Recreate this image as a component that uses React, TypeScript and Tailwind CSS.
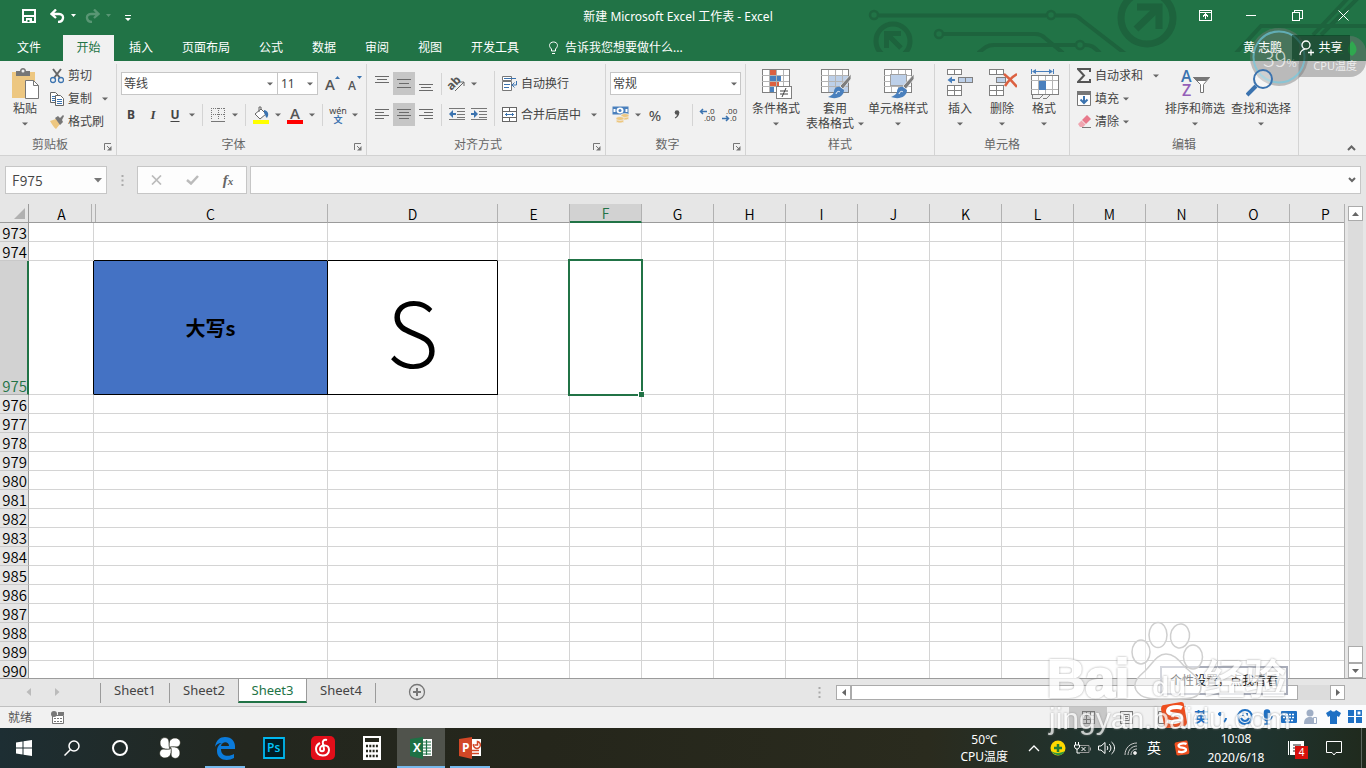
import React from 'react';
import type { ReactNode } from 'react';

const Caret = ({ className = '' }: { className?: string }) => (
  <svg className={`shrink-0 ${className}`} width="6" height="4" viewBox="0 0 6 4">
    <path d="M0 0.5h6L3 3.5z" fill="#666" />
  </svg>
);

const Launcher = () => (
  <svg width="8" height="8" viewBox="0 0 8 8">
    <path d="M0.5 7V0.5H7M3 3l3 3" stroke="#777" fill="none" />
    <path d="M7.5 3v4.5H3z" fill="#777" />
  </svg>
);

function Group({ label, width, launcher, children }: { label: string; width: string; launcher?: boolean; children: ReactNode }) {
  return (
    <section aria-label={label} className={`flex shrink-0 flex-col border-r border-[#d4d4d4] ${width}`}>
      <div className="flex h-[71px]">{children}</div>
      <div className={`relative h-[18px] text-center leading-5 text-[#666] ${launcher ? 'pr-4' : ''}`}>
        {label}
        {launcher && (
          <button aria-label={`${label}设置`} className="absolute right-1 bottom-0.5">
            <Launcher />
          </button>
        )}
      </div>
    </section>
  );
}

const Btn = ({ label, w = 'w-[22px]', active, children }: { label: string; w?: string; active?: boolean; children: ReactNode }) => (
  <button aria-label={label} className={`flex h-[23px] shrink-0 items-center justify-center ${w} ${active ? 'bg-[#c6c6c6]' : ''}`}>
    {children}
  </button>
);
const Drop = ({ label }: { label: string }) => (
  <Btn label={label} w="w-3">
    <Caret />
  </Btn>
);
const Sep = ({ h = 'h-[22px]' }: { h?: string }) => <div className={`mx-1 w-px shrink-0 bg-[#d4d4d4] ${h}`} />;

function Big({ label, second, w, children }: { label: string; second?: string; w: string; children: ReactNode }) {
  return (
    <button className={`flex shrink-0 flex-col items-center pt-1 whitespace-nowrap ${w}`}>
      {children}
      <span className="mt-0.5 leading-[15px]">{label}</span>
      <span className="flex h-[15px] items-center gap-1 leading-[15px]">
        {second}
        <Caret />
      </span>
    </button>
  );
}

function Row({ label, drop, children }: { label: string; drop?: string; children: ReactNode }) {
  return (
    <button className="flex h-[23px] items-center gap-1 whitespace-nowrap">
      {children}
      <span>{label}</span>
      {drop && <Caret className={drop} />}
    </button>
  );
}

const Lines = ({ rows }: { rows: number[][] }) => (
  <svg width="16" height="18" viewBox="0 0 16 18" shapeRendering="crispEdges">
    {rows.map(([x, y, w]) => (
      <rect key={y} x={x} y={y} width={w} height="1" fill="#6a6a6a" />
    ))}
  </svg>
);

const GridIcon = ({ kind }: { kind: 'cond' | 'table' | 'cell' }) => (
  <svg width="32" height="31" viewBox="0 0 32 31">
    <g shapeRendering="crispEdges">
      <path d="M2.5 1.5h27v23h-27z" fill="#fff" stroke="#808080" />
      {kind === 'cond' && (
        <>
          <path d="M10 2h6v5h-6zM10 13h9v5h-9z" fill="#dc6141" />
          <path d="M10 7h11v6H10zM10 18h4v6h-4z" fill="#4a80bd" />
        </>
      )}
      {kind === 'table' && <path d="M9 8h20v16H9z" fill="#bdd0e9" />}
      <path d="M2 7.5h27M2 13.5h27M2 18.5h27M9.5 2v22M16.5 2v22M23.5 2v22" stroke="#b4b4b4" fill="none" />
      {kind === 'cell' && <path d="M8.5 6.5h16v11h-16z" fill="#bdd0e9" stroke="#a0a0a0" />}
      {kind === 'cond' && <path d="M16.5 18.5h15v12h-15z" fill="#fff" stroke="#808080" />}
    </g>
    {kind === 'cond' ? (
      <path d="M20 23h8M20 26h8M26 20l-4 9" stroke="#444" fill="none" />
    ) : (
      <>
        <path d="M32 6L21 18l3 3 8-10z" fill="#7e7e7e" stroke="#f1f1f1" strokeWidth=".8" />
        <path d="M21 19c-5-1-6 3-6 5-1 3-4 4-6 5 8 3 16 0 16-7z" fill="#4a80bd" />
        <path d="M17 26c1-3 3-3 4-2" stroke="#fff" fill="none" />
      </>
    )}
  </svg>
);

const CellsIcon = ({ kind }: { kind: 'ins' | 'del' | 'fmt' }) => (
  <svg width="30" height="31" viewBox="0 0 30 31">
    <g shapeRendering="crispEdges" fill="#fff" stroke="#808080">
      {kind === 'fmt' ? (
        <>
          <path d="M2.5 7.5h27v19h-27z" />
          <path d="M2 12.500h27M2 21.500h27M9.500 8v18M16.500 8v18M23.500 8v18" stroke="#b4b4b4" />
          <path d="M10 13h7v9h-7z" fill="#4a80bd" stroke="none" />
          <path d="M3 27v3h8l3-3M14 30h4l3-3" fill="none" />
          <path d="M2.500 1v5M24.500 1v5M4 3.500h19" stroke="#4a80bd" />
        </>
      ) : (
        <>
          <path d="M2.500 1.500h14v5h-14zM9.500 1v5M2.500 17.500h14v10h-14zM2.500 22.500h14M9.500 17v10" />
          <path d={kind === 'ins' ? 'M13.500 9.500h14v5h-14zM20.500 9v5' : 'M9.500 9.500h9v5h-9z'} fill="#bdd0e9" />
        </>
      )}
    </g>
    {kind === 'ins' && <path d="M10 11v2H7v2.500L2.500 12 7 8.500V11z" fill="#4a80bd" />}
    {kind === 'del' && <path d="M17 6c5 4 9 8 13 13M30 6c-5 3-9 7-12 12" stroke="#dc6141" strokeWidth="2.500" fill="none" />}
    {kind === 'fmt' && <path d="M7 1L3 3.500 7 6zM20 1l4 2.500L20 6z" fill="#4a80bd" />}
  </svg>
);

const FontA = ({ up }: { up?: boolean }) => (
  <svg className="overflow-visible" width="16" height="20" viewBox="0 0 16 20">
    <text x={up ? 0 : 1} y="16" fontSize={up ? 15 : 12} fontWeight="600" fill="#555" fontFamily="Open Sans">A</text>
    <path d={up ? 'M10 5l2.500-3L15 5z' : 'M10 2h5l-2.500 3z'} fill="#3b73af" />
  </svg>
);

function Header() {
  const tabs = ['插入', '页面布局', '公式', '数据', '审阅', '视图', '开发工具'];
  return (
    <header className="relative h-[61px] shrink-0 overflow-hidden bg-[#217346] text-white">
      <svg className="absolute top-0 right-0" width="506" height="52" viewBox="0 0 506 52" fill="none" stroke="#1d633d" strokeWidth="4">
        <circle cx="14" cy="15" r="4" strokeWidth="2.500" />
        <path d="M19 15.500h167" />
        <circle cx="191" cy="15" r="4" strokeWidth="2.500" />
        <path d="M196 15.500h17c3 0 5 1 8 4l44 34" />
        <circle cx="79" cy="34" r="4" strokeWidth="2.500" />
        <path d="M84 34h91c4 0 7 1 10 4l18 15M118 53l8-6c3-2 5-2 8-2h81" />
        <circle cx="220" cy="45" r="4" strokeWidth="2.500" />
        <path d="M225 45c6 0 8 1 15 8" />
        <circle cx="33" cy="41" r="17" strokeWidth="5" />
        <path d="M41 33.500H26.500V48M27 34l14 14" strokeWidth="5" />
        <circle cx="287" cy="18" r="26" strokeWidth="7" />
        <path d="M277 7h22v22M299 7l-23 22" strokeWidth="7" />
        <path d="M376 53l25-27h105M461 35l40-40M453 35l35-37" />
      </svg>
      <div className="relative flex h-[35px] items-center">
        <div className="flex flex-1 items-center pb-1 pl-[22px]">
          <button aria-label="保存">
            <svg width="14" height="14" viewBox="0 0 14 14" fill="none" stroke="#fff" strokeWidth="2">
              <path d="M1 1h12v12H1zM2 7h10" /><path d="M4 9h6v5H4z" fill="#fff" stroke="none" /><path d="M5.500 11h2v2h-2z" fill="#217346" stroke="none" />
            </svg>
          </button>
          <button aria-label="撤消" className="ml-[14px] flex items-center gap-1.5">
            <svg width="15" height="14" viewBox="0 0 15 14" fill="none" stroke="#fff" strokeWidth="2.300"><path d="M6 0.500L1.500 5 6 9M2 5h7c6 0 5 8-1 8" /></svg>
            <svg width="5" height="3" viewBox="0 0 5 3"><path d="M0 0h5L2.500 3z" fill="#fff" /></svg>
          </button>
          <button aria-label="恢复" className="ml-[9px] flex items-center gap-1.5 opacity-25">
            <svg width="15" height="14" viewBox="0 0 15 14" fill="none" stroke="#fff" strokeWidth="2.300"><path d="M9 0.500L13.500 5 9 9M13 5H6c-6 0-5 8 1 8" /></svg>
            <svg width="5" height="3" viewBox="0 0 5 3"><path d="M0 0h5L2.500 3z" fill="#fff" /></svg>
          </button>
          <button aria-label="自定义快速访问工具栏" className="ml-[14px] pt-1">
            <svg width="6" height="6" viewBox="0 0 6 6"><path d="M0 0h6v1H0zM0 3h6L3 6z" fill="#fff" /></svg>
          </button>
        </div>
        <h1 className="pr-8 pb-0.5 text-[12px] whitespace-nowrap">新建 Microsoft Excel 工作表 - Excel</h1>
        <div className="flex flex-1 justify-end pb-1">
          <button aria-label="功能区显示选项" className="flex w-[46px] justify-center">
            <svg width="13" height="11" viewBox="0 0 13 11" fill="none" stroke="#fff" shapeRendering="crispEdges"><path d="M0.500 0.500h12v10H0.500zM0 2.500h13M6.500 9V4M4 6.500L6.500 4 9 6.500" /></svg>
          </button>
          <button aria-label="最小化" className="flex w-[46px] items-center justify-center"><span className="h-px w-[10px] bg-white" /></button>
          <button aria-label="还原" className="flex w-[46px] justify-center">
            <svg width="11" height="11" viewBox="0 0 11 11" fill="none" stroke="#fff" shapeRendering="crispEdges"><path d="M0.500 2.500h7v8h-7zM2.500 2V0.500h8v8H8" /></svg>
          </button>
          <button aria-label="关闭" className="flex w-[46px] justify-center">
            <svg width="11" height="11" viewBox="0 0 11 11" stroke="#fff"><path d="M0.500 0.500l10 10M10.500 0.500l-10 10" /></svg>
          </button>
        </div>
      </div>
      <nav className="relative flex h-[26px] items-center gap-px leading-[22px]">
        <button className="h-full w-[62px] pr-1">文件</button>
        <button className="h-full w-[51px] bg-[#f1f1f1] text-[#217346]">开始</button>
        {tabs.map((t) => (
          <button key={t} className="h-full px-[14px] whitespace-nowrap">{t}</button>
        ))}
        <button className="ml-[14px] flex items-center gap-1.5 whitespace-nowrap">
          <svg width="11" height="14" viewBox="0 0 11 14" fill="none" stroke="#fff"><path d="M3.500 10V8C0 5 1.500 1 5.500 1s5.500 4 2 7v2zM4 12.500h3" /></svg>
          告诉我您想要做什么...
        </button>
        <button className="relative z-10 mr-[9px] ml-auto">黄 志鹏</button>
        <button className="relative z-10 mr-4 flex h-full w-[58px] items-center justify-center gap-1 bg-[#06381e]/60">
          <svg width="15" height="16" viewBox="0 0 15 16" fill="none" stroke="#fff" strokeWidth="1.300"><circle cx="7" cy="5" r="4" /><path d="M1 15c0-3 2-5 5-6M9 12.500h6M12 9.500v6" /></svg>
          共享
        </button>
      </nav>
    </header>
  );
}

function Ribbon() {
  return (
    <div className="relative flex h-[95px] shrink-0 overflow-hidden border-b border-[#d2d2d2] bg-[#f1f1f1] pt-[3px] text-[#444]">
      <Group label="剪贴板" width="w-[117px]" launcher>
        <Big label="粘贴" w="w-[50px]">
          <svg width="28" height="31" viewBox="0 0 28 31">
            <path d="M1 4h23v26H1z" fill="#edc781" />
            <path d="M5 3h4c0-4 6-4 6 0h4v5H5z" fill="#777" /><circle cx="12" cy="3" r="1.500" fill="#f1f1f1" />
            <path d="M14.500 12.500h8l5 5v13h-13z" fill="#fff" stroke="#777" /><path d="M22.500 12.500v5h5" fill="none" stroke="#777" />
          </svg>
        </Big>
        <div className="flex flex-col items-start">
          <Row label="剪切">
            <svg width="14" height="16" viewBox="0 0 14 16" fill="none"><path d="M3 1l7 9M11 1L4 10" stroke="#666" strokeWidth="2" /><circle cx="3" cy="12" r="2.500" stroke="#3b73af" strokeWidth="1.300" /><circle cx="11" cy="12" r="2.500" stroke="#3b73af" strokeWidth="1.300" /></svg>
          </Row>
          <Row label="复制" drop="ml-[6px]">
            <svg width="14" height="14" viewBox="0 0 14 14" fill="#fff" stroke="#666"><path d="M0.500 0.500h5l3 3v7h-8z" /><path d="M2 4.500h3M2 6.500h3M2 8.500h3" stroke="#3b73af" /><path d="M5.500 3.500h5l3 3v7h-8z" /><path d="M7 7.500h5M7 9.500h5M7 11.500h5" stroke="#3b73af" /></svg>
          </Row>
          <Row label="格式刷">
            <svg width="14" height="14" viewBox="0 0 14 14"><path d="M0 6l6-2 4 5-4 5c-2-1-4-5-6-8z" fill="#edc781" /><path d="M5 3l3-2 2 2 3-3 1 1-2 4 1 2-3 3z" fill="#777" /></svg>
          </Row>
        </div>
      </Group>

      <Group label="字体" width="w-[250px]" launcher>
        <div className="flex flex-col gap-2 pt-2 pl-[3px]">
          <div className="flex items-center pl-px">
            <div className="flex h-[23px] w-[157px] items-center justify-between border border-[#c6c6c6] bg-white pr-1 pl-0.5">
              <input aria-label="字体" defaultValue="等线" className="w-24 outline-none" /><Caret />
            </div>
            <div className="-ml-px flex h-[23px] w-[41px] items-center justify-between border border-[#c6c6c6] bg-white pr-1 pl-[3px]">
              <input aria-label="字号" defaultValue="11" className="w-5 outline-none" /><Caret />
            </div>
            <div className="flex pl-1"><Btn label="增大字号"><FontA up /></Btn><Btn label="减小字号"><FontA /></Btn></div>
          </div>
          <div className="flex items-center">
            <Btn label="加粗"><b>B</b></Btn>
            <Btn label="倾斜"><b className="font-['Liberation_Serif'] text-[13px] italic">I</b></Btn>
            <Btn label="下划线"><b className="underline underline-offset-2">U</b></Btn>
            <Drop label="下划线选项" /><Sep />
            <Btn label="边框">
              <svg width="14" height="14" viewBox="0 0 14 14" fill="none" stroke="#777" shapeRendering="crispEdges"><path d="M0.500 0v12M13.500 0v12M7.500 0v12M0 0.500h14M0 6.500h14" strokeDasharray="1 1" /><path d="M0 13.500h14" /></svg>
            </Btn>
            <Drop label="边框选项" /><Sep />
            <Btn label="填充颜色">
              <svg width="18" height="18" viewBox="0 0 18 18"><path d="M3 8l6-5 5 5-6 5z" fill="#fff" stroke="#666" /><path d="M7 6V1h2v3" fill="none" stroke="#666" /><path d="M12 4c5 1 5 5 3 8-2-1-1-3-3-5z" fill="#3b73af" /><path d="M1 14h16v4H1z" fill="#ff0" /></svg>
            </Btn>
            <Drop label="填充颜色选项" />
            <Btn label="字体颜色">
              <svg className="overflow-visible" width="16" height="18" viewBox="0 0 16 18"><text x="3" y="13" fontSize="15" fontWeight="600" fill="#555" fontFamily="Open Sans">A</text><path d="M0 14h16v4H0z" fill="red" /></svg>
            </Btn>
            <Drop label="字体颜色选项" /><Sep />
            <Btn label="拼音"><span className="flex flex-col items-center"><span className="text-[9px] leading-[9px]">wén</span><span className="text-[9px] leading-[9px] font-bold text-[#3b73af]">文</span></span></Btn>
            <Drop label="拼音选项" />
          </div>
        </div>
      </Group>

      <Group label="对齐方式" width="w-[239px]" launcher>
        <div className="flex flex-col gap-2 pt-2 pl-1">
          <div className="flex items-center">
            <Btn label="顶端对齐"><Lines rows={[[1, 1, 14], [3, 4, 10], [1, 7, 14]]} /></Btn>
            <Btn label="垂直居中" active><Lines rows={[[1, 4, 14], [3, 8, 10], [1, 12, 14]]} /></Btn>
            <Btn label="底端对齐"><Lines rows={[[1, 9, 14], [3, 12, 10], [1, 15, 14]]} /></Btn>
            <Sep />
            <Btn label="方向">
              <svg className="overflow-visible" width="18" height="18" viewBox="0 0 18 18"><text x="-1" y="12" transform="rotate(-45 6 9)" fontSize="12" fontWeight="700" fill="#555" fontFamily="Open Sans">ab</text><path d="M7 16l9-9M16 11V7h-4" stroke="#666" fill="none" /></svg>
            </Btn>
            <Drop label="方向选项" />
          </div>
          <div className="flex items-center">
            <Btn label="左对齐"><Lines rows={[[1, 3, 14], [1, 6, 9], [1, 9, 14], [1, 12, 9]]} /></Btn>
            <Btn label="居中" active><Lines rows={[[1, 3, 14], [3, 6, 10], [1, 9, 14], [3, 12, 10]]} /></Btn>
            <Btn label="右对齐"><Lines rows={[[1, 3, 14], [6, 6, 9], [1, 9, 14], [6, 12, 9]]} /></Btn>
            <Sep />
            {['减少缩进量', '增加缩进量'].map((t, i) => (
              <Btn key={t} label={t}>
                <svg width="16" height="16" viewBox="0 0 16 16"><path d="M0 1.500h16M8 4.500h8M8 7.500h8M8 10.500h8M0 12.500h16" stroke="#777" fill="none" shapeRendering="crispEdges" /><path d={i ? 'M0 6h3V3l4 4-4 4V8H0z' : 'M7 6H4V3L0 7l4 4V8h3z'} fill="#3b73af" /></svg>
              </Btn>
            ))}
          </div>
        </div>
        <div className="pt-[7px]"><Sep h="h-[55px]" /></div>
        <div className="flex flex-col items-start gap-2 pt-2 pl-[3px]">
          <Row label="自动换行">
            <svg width="15" height="16" viewBox="0 0 15 16" fill="none"><path d="M0.500 0.500h9v4h-9zM0.500 5.500h9v9h-9z" fill="#fff" stroke="#777" /><path d="M2 2.500h12M2 8.500h6M2 11.500h5M14.500 5v4h-5M12.500 6.500L10 9l2.500 2.500" stroke="#3b73af" /></svg>
          </Row>
          <Row label="合并后居中" drop="ml-1.5">
            <svg width="15" height="15" viewBox="0 0 15 15" fill="none" shapeRendering="crispEdges"><path d="M0.500 0.500h14v14h-14zM0 4.500h14M0 10.500h14M7.500 0v4M7.500 11v3" stroke="#666" fill="#fff" /><path d="M3 7.500h9M4.500 6v3M10.500 6v3" stroke="#3b73af" /></svg>
          </Row>
        </div>
      </Group>

      <Group label="数字" width="w-[140px]" launcher>
        <div className="flex flex-col gap-2 pt-2 pl-1">
          <div className="relative w-[131px]">
            <select aria-label="数字格式" className="block h-[23px] w-full appearance-none border border-[#c6c6c6] bg-white px-0.5">
              <option>常规</option>
            </select>
            <Caret className="pointer-events-none absolute top-[10px] right-1" />
          </div>
          <div className="flex items-center">
            <Btn label="货币">
              <svg width="18" height="17" viewBox="0 0 18 17"><path d="M0.500 0.500h16v8h-16z" fill="#4a80bd" /><ellipse cx="8" cy="4.500" rx="3.500" ry="3" fill="#fff" /><path d="M2.500 3v3M14.500 3v3" stroke="#fff" strokeWidth="2" /><circle cx="8" cy="4.500" r="1.500" fill="#4a80bd" /><g fill="#edc781" stroke="#f1f1f1" strokeWidth=".7"><ellipse cx="13" cy="12" rx="4" ry="2" /><ellipse cx="13" cy="9.500" rx="4" ry="2" /><ellipse cx="8" cy="15" rx="4" ry="2" /><ellipse cx="8" cy="12.500" rx="4" ry="2" /></g></svg>
            </Btn>
            <Drop label="货币选项" />
            <Btn label="百分比"><span className="text-[15px]">%</span></Btn>
            <Btn label="千位分隔"><svg width="6" height="10" viewBox="0 0 6 10"><circle cx="3" cy="2.500" r="2.300" fill="#555" /><path d="M5.300 2.500c0 3-2 5-4 6l-.5-1c2-1 2-2 2.200-3z" fill="#555" /></svg></Btn>
            <Sep />
            {['增加小数位数', '减少小数位数'].map((t, i) => (
              <Btn key={t} label={t}>
                <svg className="overflow-visible" width="18" height="16" viewBox="0 0 18 16" fontFamily="Open Sans" fontSize="8" fill="#333">
                  <text x={i ? 5 : 9} y="7">{i ? '.00' : '.0'}</text><text x={i ? 9 : 5} y="14">{i ? '.0' : '.00'}</text>
                  <path d={i ? 'M1 11.500h6M5 9l2.500 2.500L5 14' : 'M2 4.500h6M4 2L1.500 4.500 4 7'} stroke="#3b73af" strokeWidth="1.500" fill="none" />
                </svg>
              </Btn>
            ))}
          </div>
        </div>
      </Group>

      <Group label="样式" width="w-[189px]">
        <Big label="条件格式" w="w-[60px]"><GridIcon kind="cond" /></Big>
        <Big label="套用" second="表格格式" w="w-[58px]"><GridIcon kind="table" /></Big>
        <Big label="单元格样式" w="w-[68px]"><GridIcon kind="cell" /></Big>
      </Group>

      <Group label="单元格" width="w-[135px]">
        <div className="flex pl-1">
          <Big label="插入" w="w-[42px]"><CellsIcon kind="ins" /></Big>
          <Big label="删除" w="w-[42px]"><CellsIcon kind="del" /></Big>
          <Big label="格式" w="w-[42px]"><CellsIcon kind="fmt" /></Big>
        </div>
      </Group>

      <Group label="编辑" width="w-[229px]">
        <div className="flex w-[92px] flex-col items-start pl-[7px]">
          <Row label="自动求和" drop="ml-[6px]">
            <svg width="14" height="15" viewBox="0 0 14 15" fill="none" stroke="#555" strokeWidth="2"><path d="M13 4V1H1l6 6.500L1 14h12v-3" /></svg>
          </Row>
          <Row label="填充" drop="ml-0">
            <svg width="14" height="15" viewBox="0 0 14 15"><path d="M0.500 0.500h13v14h-13z" fill="#fff" stroke="#777" /><path d="M0 0h14v4H0z" fill="#777" /><path d="M7 5v7M3.500 8.500L7 12l3.500-3.500" stroke="#3b73af" strokeWidth="2" fill="none" /></svg>
          </Row>
          <Row label="清除" drop="ml-0">
            <svg width="14" height="14" viewBox="0 0 14 14"><path d="M5 5l5-5 4 4-5 5z" fill="#e8798b" /><path d="M4.500 5.500L8.500 9.500 6 12H3L1 9z" fill="#f0a5b0" /><path d="M5 12.500h9" stroke="#777" /></svg>
          </Row>
        </div>
        <Big label="排序和筛选" w="w-[66px]">
          <svg className="overflow-visible" width="32" height="31" viewBox="0 0 32 31" fontFamily="Open Sans" fontWeight="600" fontSize="16"><text x="2" y="14" fill="#3b73af">A</text><text x="3" y="28" fill="#9460b8">Z</text><path d="M14.500 9.500h16l-6 7v8h-3v-8z" fill="#fff" stroke="#777" /><path d="M14 9h17l-4 4h-9z" fill="#777" /></svg>
        </Big>
        <Big label="查找和选择" w="w-[66px]">
          <svg className="relative z-10" width="30" height="31" viewBox="0 0 30 31" fill="none" stroke="#3b73af"><circle cx="17" cy="11" r="9" strokeWidth="2" fill="#fff" fillOpacity=".3" /><path d="M10 18L1 27" strokeWidth="4" /></svg>
        </Big>
      </Group>
      <button aria-label="折叠功能区" className="mr-[10px] mb-1 ml-auto self-end">
        <svg width="9" height="6" viewBox="0 0 9 6"><path d="M1 5l3.500-3.500L8 5" stroke="#666" strokeWidth="2" fill="none" /></svg>
      </button>
    </div>
  );
}

const Dots = () => (
  <svg width="3" height="11" viewBox="0 0 3 11" fill="#aaa"><path d="M0.500 0h2v2h-2zM0.500 4.500h2v2h-2zM0.500 9h2v2h-2z" /></svg>
);

function FormulaBar() {
  return (
    <div className="flex h-12 shrink-0 items-center bg-[#e6e6e6] pr-[5px] pl-[5px]">
      <div className="flex h-7 w-[102px] items-center justify-between border border-[#c6c6c6] bg-[#fdfdfd] pr-1 pl-1.5">
        <input aria-label="名称框" defaultValue="F975" className="h-5 w-20 font-['Noto_Sans_CJK_SC',sans-serif] text-[14px] leading-5 font-[350] text-[#444] outline-none" />
        <svg width="8" height="5" viewBox="0 0 8 5"><path d="M0 0h8L4 4.500z" fill="#777" /></svg>
      </div>
      <div className="flex w-[30px] justify-center"><Dots /></div>
      <div className="flex h-7 w-[110px] items-center border border-[#c6c6c6] bg-[#fdfdfd]">
        <button aria-label="取消" className="flex w-9 justify-center"><svg width="11" height="10" viewBox="0 0 11 10" stroke="#bbb" strokeWidth="1.700"><path d="M1 0.500l9 9M10 0.500l-9 9" /></svg></button>
        <button aria-label="输入" className="flex w-9 justify-center"><svg width="13" height="10" viewBox="0 0 13 10" fill="none" stroke="#bbb" strokeWidth="2.500"><path d="M1 5l4 3.500L12 1" /></svg></button>
        <button aria-label="插入函数" className="w-9 font-['Liberation_Serif'] text-[15px] font-bold text-[#666] italic">f<span className="text-[11px]">x</span></button>
      </div>
      <div className="ml-[3px] flex h-7 flex-1 items-center border border-[#c6c6c6] bg-[#fdfdfd] pr-1">
        <input aria-label="编辑栏" className="flex-1 outline-none" />
        <svg width="8" height="6" viewBox="0 0 8 6"><path d="M1 1l3 3 3-3" stroke="#666" strokeWidth="2" fill="none" /></svg>
      </div>
    </div>
  );
}

const columns = ['A', 'C', 'D', 'E', 'F', 'G', 'H', 'I', 'J', 'K', 'L', 'M', 'N', 'O', 'P'];
const firstRow = 973;
const rows = Array.from({ length: 18 }, (_, i) => firstRow + i);

function Cell({ row, col }: { row: number; col: string }) {
  if (row === 975 && col === 'C')
    return <td className="border-r border-b border-black bg-[#4472c4] text-center text-[20px] font-bold text-black">大写s</td>;
  if (row === 975 && col === 'D')
    return <td className="border-r border-b border-black pt-0.5 text-center text-[90px] leading-[100px] font-light text-black">S</td>;
  if (row === 975 && col === 'F')
    return (
      <td className="relative border-r border-b border-[#d4d4d4]">
        <div className="absolute -top-0.5 -right-0.5 -bottom-0.5 -left-0.5 border-2 border-[#217346]">
          <span className="absolute -right-[3px] -bottom-[3px] size-1.5 border-t border-l border-white bg-[#217346]" />
        </div>
      </td>
    );
  const right = row === 975 && col === 'A' ? 'border-r-black' : 'border-r-[#d4d4d4]';
  const bottom = row === 974 && (col === 'C' || col === 'D') ? 'border-b-black' : 'border-b-[#d4d4d4]';
  return <td className={`border-r border-b ${right} ${bottom}`} />;
}

function Sheet() {
  return (
    <main className="flex min-h-0 flex-1 bg-[#e6e6e6]">
      <div className="relative min-w-0 flex-1 overflow-hidden font-['Noto_Sans_CJK_SC',sans-serif]">
        <table className="w-[1361px] table-fixed border-separate border-spacing-0 bg-white text-[15px] text-black">
          <colgroup>
            <col className="w-[29px]" /><col className="w-[65px]" /><col className="w-[234px]" /><col className="w-[170px]" />
            {columns.slice(3).map((c) => <col key={c} className="w-[72px]" />)}
          </colgroup>
          <thead>
            <tr className="h-[19px] bg-[#e6e6e6] text-[14px] leading-[18px]">
              <th className="border-r border-b border-[#9b9b9b] p-0" aria-label="全选">
                <svg className="ml-auto mr-[3px]" width="11" height="11" viewBox="0 0 11 11"><path d="M11 0v11H0z" fill="#b1b1b1" /></svg>
              </th>
              {columns.map((c) => (
                <th
                  key={c}
                  scope="col"
                  className={`relative h-[19px] p-0 pt-0.5 align-middle leading-[15px] font-[350] ${
                    c === 'F' ? 'border-r border-b-2 border-r-[#b1b1b1] border-b-[#217346] bg-[#d2d2d2] text-[#217346]' : c === 'A' ? 'border-b border-[#9b9b9b]' : 'border-r border-b border-r-[#b1b1b1] border-b-[#9b9b9b]'
                  }`}
                >
                  {c}
                  {c === 'A' && <span className="absolute top-0 right-0.5 h-[18px] w-px bg-[#b1b1b1]" />}
                  {c === 'C' && <span className="absolute top-0 left-px h-[18px] w-px bg-[#b1b1b1]" />}
                </th>
              ))}
            </tr>
          </thead>
          <tbody>
            {rows.map((r) => (
              <tr key={r} className={r === 975 ? 'h-[134px]' : 'h-[19px]'}>
                <th
                  scope="row"
                  className={`border-b p-0 text-right align-bottom leading-[16px] font-[350] ${
                    r === 975 ? 'border-r-2 border-r-[#217346] border-b-[#b1b1b1] bg-[#d2d2d2] text-[#217346]' : 'border-r border-r-[#9b9b9b] border-b-[#c9c9c9] bg-[#e6e6e6] pr-px'
                  }`}
                >
                  {r}
                </th>
                {columns.map((c) => <Cell key={c} row={r} col={c} />)}
              </tr>
            ))}
          </tbody>
        </table>
      </div>
      <div className="flex w-[22px] shrink-0 flex-col items-center border-l border-[#b1b1b1] pt-0.5">
        <button aria-label="向上滚动" className="flex h-[15px] w-[15px] items-center justify-center border border-[#ababab] bg-white"><svg width="7" height="4" viewBox="0 0 7 4"><path d="M0 4l3.500-4L7 4z" fill="#666" /></svg></button>
        <div className="flex w-[15px] flex-1 flex-col justify-end bg-[#dcdcdc]"><div className="h-[17px] border border-[#ababab] bg-white" /></div>
        <button aria-label="向下滚动" className="flex h-[15px] w-[15px] items-center justify-center border border-[#ababab] bg-white"><svg width="7" height="4" viewBox="0 0 7 4"><path d="M0 0l3.500 4L7 0z" fill="#666" /></svg></button>
      </div>
    </main>
  );
}

function SheetTabs() {
  return (
    <div className="flex h-[29px] shrink-0 items-start border-t border-b border-t-[#9b9b9b] border-b-[#c0c0c0] bg-[#e6e6e6]">
      <div className="flex h-full w-[100px] items-center gap-6 pb-0.5 pl-[26px]">
        <button aria-label="上一张"><svg width="5" height="8" viewBox="0 0 5 8"><path d="M5 0v8L0.500 4z" fill="#bbb" /></svg></button>
        <button aria-label="下一张"><svg width="5" height="8" viewBox="0 0 5 8"><path d="M0 0v8l4.500-4z" fill="#bbb" /></svg></button>
      </div>
      {['Sheet1', 'Sheet2', 'Sheet3', 'Sheet4'].map((s) => (
        <button
          key={s}
          className={`w-[69px] text-[13px] ${
            s === 'Sheet3' ? 'h-6 border-r border-b-2 border-l border-r-[#9b9b9b] border-b-[#217346] border-l-[#9b9b9b] bg-white leading-[22px] text-[#217346]' : s === 'Sheet4' ? 'mt-1 h-5 border-r border-[#9b9b9b] pb-[5px] leading-[15px] text-[#444]' : 'mt-1 h-5 border-l border-[#9b9b9b] pb-[5px] leading-[15px] text-[#444]'
          }`}
        >
          {s}
        </button>
      ))}
      <button aria-label="新工作表" className="mt-1 ml-8"><svg width="18" height="18" viewBox="0 0 18 18" fill="none" stroke="#777"><circle cx="9" cy="9" r="7.500" strokeWidth="1.300" /><path d="M5 9h8M9 5v8" strokeWidth="2" /></svg></button>
      <div className="mr-[21px] ml-auto flex h-full items-center">
        <span className="mr-[15px]"><Dots /></span>
        <button aria-label="向左滚动" className="flex h-[15px] w-[15px] items-center justify-center border border-[#ababab] bg-white"><svg width="4" height="7" viewBox="0 0 4 7"><path d="M4 0v7L0 3.500z" fill="#666" /></svg></button>
        <div className="h-[15px] w-[479px] bg-[#dcdcdc]"><div className="h-full w-[447px] border border-[#ababab] bg-white" /></div>
        <button aria-label="向右滚动" className="flex h-[15px] w-[15px] items-center justify-center border border-[#ababab] bg-white"><svg width="4" height="7" viewBox="0 0 4 7"><path d="M0 0v7l4-3.500z" fill="#666" /></svg></button>
      </div>
    </div>
  );
}

function StatusBar() {
  return (
    <div className="flex h-[21px] shrink-0 items-center bg-[#f1f1f1] pl-2 text-[#555]">
      <span>就绪</span>
      <svg className="ml-[19px]" width="14" height="14" viewBox="0 0 14 14"><path d="M1.500 4.500h11v8h-11z" fill="#fff" stroke="#777" /><path d="M7 1h6v3H7z" fill="#777" /><circle cx="3" cy="3" r="3" fill="#777" /><path d="M3 7.500h9M3 10.500h9" stroke="#777" strokeDasharray="2 1" /></svg>
      <div className="mr-[183px] ml-auto flex h-full text-[#777]">
        <button aria-label="普通" className="flex w-[38px] items-center justify-center bg-[#c8c8c8]"><svg width="13" height="13" viewBox="0 0 13 13" fill="none" stroke="#777" shapeRendering="crispEdges"><path d="M0.500 0.500h12v12h-12zM0 4.500h12M0 8.500h12M4.500 0v12M8.500 0v12" /></svg></button>
        <button aria-label="页面布局视图" className="flex w-[38px] items-center justify-center"><svg width="13" height="13" viewBox="0 0 13 13" fill="none" stroke="#777" shapeRendering="crispEdges"><path d="M0.500 0.500h12v12h-12zM3.500 3.500h6v6h-6zM5 5.500h3M5 7.500h3" /></svg></button>
        <button aria-label="分页预览" className="flex w-[38px] items-center justify-center"><svg width="13" height="13" viewBox="0 0 13 13" fill="none" stroke="#777"><path d="M0.500 0.500h12v12h-12z" /></svg></button>
      </div>
    </div>
  );
}

const SogouS = ({ size }: { size: number }) => (
  <svg width={size} height={size} viewBox="0 0 28 28">
    <path d="M4 4l17-3c2 0 3 1 3 3l3 17c0 2-1 4-3 4L7 27c-2 0-3-1-3-3L1 8c0-2 1-4 3-4z" fill="#ee4f1f" />
    <path d="M22 7c-4-2-14-1-14 3 0 5 13 2 13 7 0 4-9 5-14 3" fill="none" stroke="#fff" strokeWidth="4" />
  </svg>
);

const EdgeIcon = () => (
  <svg width="22" height="24" viewBox="0 0 22 24"><path d="M1 11C2 4 6 1 11 1c7 0 10 5 10 9v3H7c0 8 8 8 13 5v4c-7 4-17 2-17-7 0-4 2-7 5-8-4 0-6 2-7 4zm6-1h8c0-5-7-5-8 0z" fill="#0b7bdb" /></svg>
);

const Office = ({ letter, color, ppt }: { letter: string; color: string; ppt?: boolean }) => (
  <svg width="24" height="24" viewBox="0 0 24 24">
    <path d="M12 3h11v17H12z" fill="#fff" />
    {ppt ? <path d="M15.500 8a3.500 3.500 0 1 0 4-2.500V9h-3M14 14.500h7M14 17.500h7" stroke={color} fill="none" strokeWidth="1.500" /> : <path d="M13 6h9M13 9h9M13 12h9M13 15h9M13 18h9M17.500 4v15" stroke={color} strokeWidth="1.200" />}
    <path d="M1 3l13-2v22L1 20z" fill={color} />
    <text x="4" y="16" fontSize="12" fontWeight="700" fill="#fff" fontFamily="Open Sans">{letter}</text>
  </svg>
);

function Taskbar() {
  const apps: [string, ReactNode, string][] = [
    ['Edge', <EdgeIcon />, 'line'],
    ['Photoshop', <svg width="22" height="22" viewBox="0 0 22 22"><path d="M1 1h20v20H1z" fill="#001d26" stroke="#00b8f0" strokeWidth="1.800" /><text x="4" y="15" fontSize="12" fill="#00c8ff" fontWeight="600" fontFamily="Open Sans">Ps</text></svg>, ''],
    ['网易云音乐', <svg width="24" height="24" viewBox="0 0 24 24" fill="none" stroke="#fff" strokeWidth="2"><rect width="24" height="24" rx="5" fill="#e20e1a" stroke="none" /><path d="M16 4c-3-1-5 1-4 4l1 5c0 3-4 3-4 0 0-5 9-5 9 1 0 8-13 7-13-1 0-3 2-5 4-6" /></svg>, ''],
    ['计算器', <svg width="18" height="24" viewBox="0 0 18 24"><path d="M0 0h18v24H0z" fill="#fff" /><path d="M2 2h14v4H2z" fill="#24261c" /><path d="M3 10h12M3 15h12M3 20h12" stroke="#24261c" strokeWidth="2.500" strokeDasharray="2 1.300" /></svg>, ''],
    ['Excel', <Office letter="X" color="#1e7145" />, 'active'],
    ['PowerPoint', <Office letter="P" color="#d24726" ppt />, 'line'],
  ];
  return (
    <footer className="flex h-10 shrink-0 bg-[linear-gradient(90deg,#1d2e33_0%,#23271f_18%,#25261b_40%,#2a2b1e_68%,#20332f_80%,#1f3430_92%,#202a1d_100%)] text-white">
      <button aria-label="开始菜单" className="flex w-12 items-center justify-center"><svg width="16" height="16" viewBox="0 0 16 16" fill="#fff"><path d="M0 2.500l6.500-1v6H0zM7.500 1.300L16 0v7.500H7.500zM0 8.500h6.500v6l-6.500-1zM7.500 8.500H16V16l-8.500-1.300z" /></svg></button>
      <button aria-label="搜索" className="flex w-12 items-center justify-center"><svg width="16" height="16" viewBox="0 0 16 16" fill="none" stroke="#fff" strokeWidth="1.500"><circle cx="10" cy="6" r="5" /><path d="M6.500 9.500L0.500 15.500" /></svg></button>
      <button aria-label="Cortana" className="flex w-12 items-center justify-center"><span className="size-4 rounded-full border-2 border-white" /></button>
      <button aria-label="应用" className="mr-[5px] flex w-[52px] items-center justify-center">
        <svg width="22" height="22" viewBox="0 0 22 22">
          <g fill="#fff" stroke="#24261c" strokeWidth=".7">
            <path d="M10 11C9 4 12 1 16 1c7 0 7 9 1 9-3 0-5 0-7 1z" />
            <path d="M11 10c7-1 10 2 10 6 0 7-9 7-9 1 0-3 0-5-1-7z" />
            <path d="M12 11c1 7-2 10-6 10-7 0-7-9-1-9 3 0 5 0 7-1z" />
            <path d="M11 12C4 13 1 10 1 6c0-7 9-7 9-1 0 3 0 5 1 7z" />
          </g>
        </svg>
      </button>
      <div className="flex gap-px">
        {apps.map(([name, icon, state]) => (
          <button key={name} aria-label={name} className={`relative flex w-12 items-center justify-center ${state === 'active' ? 'bg-[#50534c]' : ''}`}>
            {icon}
            {state && <span className={`absolute bottom-0 h-0.5 bg-[#76b9ed] ${state === 'active' ? 'w-12' : 'w-10'}`} />}
          </button>
        ))}
      </div>
      <div className="ml-auto flex items-center">
        <div className="mr-[14px] text-center leading-[17px]">50℃<br />CPU温度</div>
        <button aria-label="显示隐藏的图标" className="flex w-6 justify-center"><svg width="12" height="7" viewBox="0 0 12 7" fill="none" stroke="#fff" strokeWidth="1.300"><path d="M1 6l5-5 5 5" /></svg></button>
        <span className="flex w-6 justify-center"><svg width="16" height="16" viewBox="0 0 16 16"><circle cx="8" cy="8" r="7.500" fill="#ffd800" /><path d="M1 11c3 5 11 6 14 0-3 2-10 3-14 0z" fill="#2b9540" /><path d="M8 4v8M4 8h8" stroke="#217b34" strokeWidth="2.500" /></svg></span>
        <span className="flex w-6 justify-center"><svg width="17" height="12" viewBox="0 0 17 12" fill="none" stroke="#fff"><path d="M1.500 0v3M4.500 0v3M0.500 3h5v2l-1.500 2H2L0.500 5zM3 7v4h3" /><path d="M6 3.500h9v7H6M16.500 5.500v3" stroke="#999" /><path d="M7.500 5l4 4M11.500 5l-4 4" /></svg></span>
        <span className="flex w-6 justify-center"><svg width="17" height="14" viewBox="0 0 17 14" fill="none" stroke="#fff"><path d="M0.500 5v4H3l4 3.500v-11L3 5zM9 5c1 1 1 3 0 4M11 3c2.500 2 2.500 6 0 8M13.500 1c4 3 4 9 0 12" /></svg></span>
        <span className="flex w-6 justify-center"><svg width="13" height="13" viewBox="0 0 13 13" fill="none" stroke="#ccc"><path d="M1 13C1 6 6 1 13 1M4 13c0-5 4-9 9-9M7 13c0-4 3-6 6-6" /><circle cx="11" cy="11" r="1.500" fill="#fff" /></svg></span>
        <span className="w-6 text-center text-[14px]">英</span>
        <span className="flex w-8 justify-center"><SogouS size={16} /></span>
        <time className="w-[76px] text-center leading-[19px]">10:08<br />2020/6/18</time>
        <span className="relative flex w-11 justify-center"><svg width="16" height="17" viewBox="0 0 16 17"><path d="M0 1h1v14H0zM2 1h14v14H2z" fill="#fff" /><path d="M5 5h8M5 8h8M5 11h5" stroke="#222" /></svg><b className="absolute top-1.5 right-2.5 size-[13px] bg-[#d8100c] text-center text-[10px] leading-[13px] font-normal">4</b></span>
        <button aria-label="通知" className="flex w-8 justify-center"><svg width="16" height="16" viewBox="0 0 16 16" fill="none" stroke="#fff"><path d="M0.500 1.500h15v11H10L8 15l-2-2.500H0.500z" /></svg></button>
        <span className="mr-1 ml-[11px] h-10 w-px bg-[#5c665e]" />
      </div>
    </footer>
  );
}

function InputMethodBar() {
  const icon = 'shrink-0 fill-none stroke-[#1e70c4]';
  return (
    <div className="absolute right-0 bottom-10 flex h-[23px] w-[180px] items-center bg-[#fbfcfd] pl-1">
      <div className="absolute -top-[4px] -left-[26px]"><SogouS size={28} /></div>
      <div className="grid flex-1 grid-cols-8 items-center justify-items-center">
        <b className="text-[14px] leading-5 text-[#1e70c4]">英</b>
        <svg className={icon} width="12" height="12" viewBox="0 0 12 12"><circle cx="3" cy="3" r="1.500" fill="#1e70c4" /><path d="M9 7c0 2-1 3-2 4" strokeWidth="2" /></svg>
        <svg className={icon} width="16" height="16" viewBox="0 0 16 16" strokeWidth="2"><circle cx="8" cy="8" r="7" /><path d="M4 9c2 4 6 4 8 0M6 4v3M10 4v3" /></svg>
        <svg className={icon} width="14" height="16" viewBox="0 0 14 16" strokeWidth="1.500"><rect x="4.500" y="1" width="5" height="8" rx="2.500" fill="#1e70c4" /><path d="M2 7c0 6 10 6 10 0M7 12v3M4 15h6" /></svg>
        <svg className={icon} width="16" height="12" viewBox="0 0 16 12"><rect width="16" height="12" rx="1" fill="#1e70c4" stroke="none" /><path d="M2 3.500h12M2 6.500h12M4 9.500h8" stroke="#fff" strokeWidth="1.500" strokeDasharray="2 1" /></svg>
        <svg width="14" height="15" viewBox="0 0 14 15" fill="#9faec5"><circle cx="6" cy="4" r="3.500" /><path d="M0 15c0-5 2-7 6-7s4 2 4 7z" /><path d="M9.500 8.500h3v6h-3z" fill="#fff" stroke="#9faec5" /></svg>
        <svg width="15" height="14" viewBox="0 0 15 14" fill="#1e70c4"><path d="M5 0c1 2 4 2 5 0l5 3-2 4-2-1v8H4V6L2 7 0 3z" /></svg>
        <svg width="14" height="13" viewBox="0 0 14 13" fill="#1e70c4"><path d="M0 0h6v6H0zM0 7h6v6H0zM8 7h6v6H8z" /><path d="M8.800 0.800h4.400v4.400H8.800z" fill="#fff" stroke="#1e70c4" strokeWidth="1.500" /></svg>
      </div>
    </div>
  );
}

function Watermark() {
  return (
    <svg className="pointer-events-none absolute right-[66px] bottom-[30px]" width="256" height="120" viewBox="1044 618 256 120">
      <g fill="#fff" fillOpacity=".5" stroke="#cfcfcf" strokeWidth="1.500">
        <ellipse cx="1141" cy="652" rx="9" ry="12" />
        <ellipse cx="1158" cy="635" rx="9" ry="12.500" />
        <ellipse cx="1180" cy="636" rx="9.500" ry="12" transform="rotate(8 1180 636)" />
        <ellipse cx="1193" cy="657" rx="9.500" ry="12" />
        <path d="M1166 654c9 0 14 8 20 14 8 7 15 12 15 19 0 13-14 12-30 12s-30 1-35-9c-4-9 4-14 10-20 7-7 11-16 20-16z" />
      </g>
      <g fill="#fff" stroke="#fff" strokeWidth="2" opacity=".75" className="drop-shadow-[0_0_1px_#888]">
        <g fontFamily="Liberation Sans" fontWeight="700">
          <text x="1047" y="697" fontSize="53">Bai</text>
          <text x="1152" y="696" fontSize="28" strokeWidth="0">du</text>
        </g>
        <text x="1204" y="694" fontSize="41" fontWeight="700" fontFamily="Noto Sans CJK SC" strokeWidth="0">经验</text>
        <text x="1049" y="729" fontSize="30" fontFamily="Liberation Sans" strokeWidth="0">jingyan.baidu.com</text>
      </g>
    </svg>
  );
}

export default function App() {
  return (
    <div className="relative flex h-screen flex-col overflow-hidden font-['Noto_Sans','Noto_Sans_CJK_SC',sans-serif] text-[12px] leading-4">
      <Header />
      <Ribbon />
      <FormulaBar />
      <Sheet />
      <SheetTabs />
      <StatusBar />
      <Taskbar />
      <aside aria-label="CPU温度" className="pointer-events-none absolute top-[27px] right-0 h-[60px] w-[117px] text-white">
        <div className="absolute top-[9px] right-0 left-[50px] h-[41px] rounded-r-2xl bg-[#777]/45" />
        <svg className="absolute top-0 left-0" width="60" height="60" viewBox="0 0 60 60"><circle cx="30" cy="30" r="29" fill="#777" fillOpacity=".45" /><circle cx="30" cy="30" r="25.500" fill="none" stroke="#6ecbe4" strokeOpacity=".65" strokeWidth="2" /></svg>
        <span className="absolute top-[18px] left-[14px] font-['Noto_Sans_CJK_SC'] text-[22px] leading-6 font-light text-white/70">39<span className="text-[11px] font-normal">%</span></span>
        <span className="absolute top-[15px] right-[22px] text-[#35b34a]/60">50℃</span>
        <span className="absolute top-[31px] right-[9px] text-[11px] text-white/75">CPU温度</span>
        <svg className="absolute top-[14px] right-[9px]" width="10" height="16" viewBox="0 0 10 16"><path d="M5 0c7 7 5 12 0 15-5-3-6-8 0-15z" fill="#2fa84f" /></svg>
      </aside>
      <div role="tooltip" className="absolute right-[78px] bottom-[73px] flex h-[29px] w-[128px] items-center justify-center border-2 border-[#a9adba] bg-white/70 whitespace-nowrap text-[#111]">个性设置，点我看看</div>
      <InputMethodBar />
      <Watermark />
    </div>
  );
}
